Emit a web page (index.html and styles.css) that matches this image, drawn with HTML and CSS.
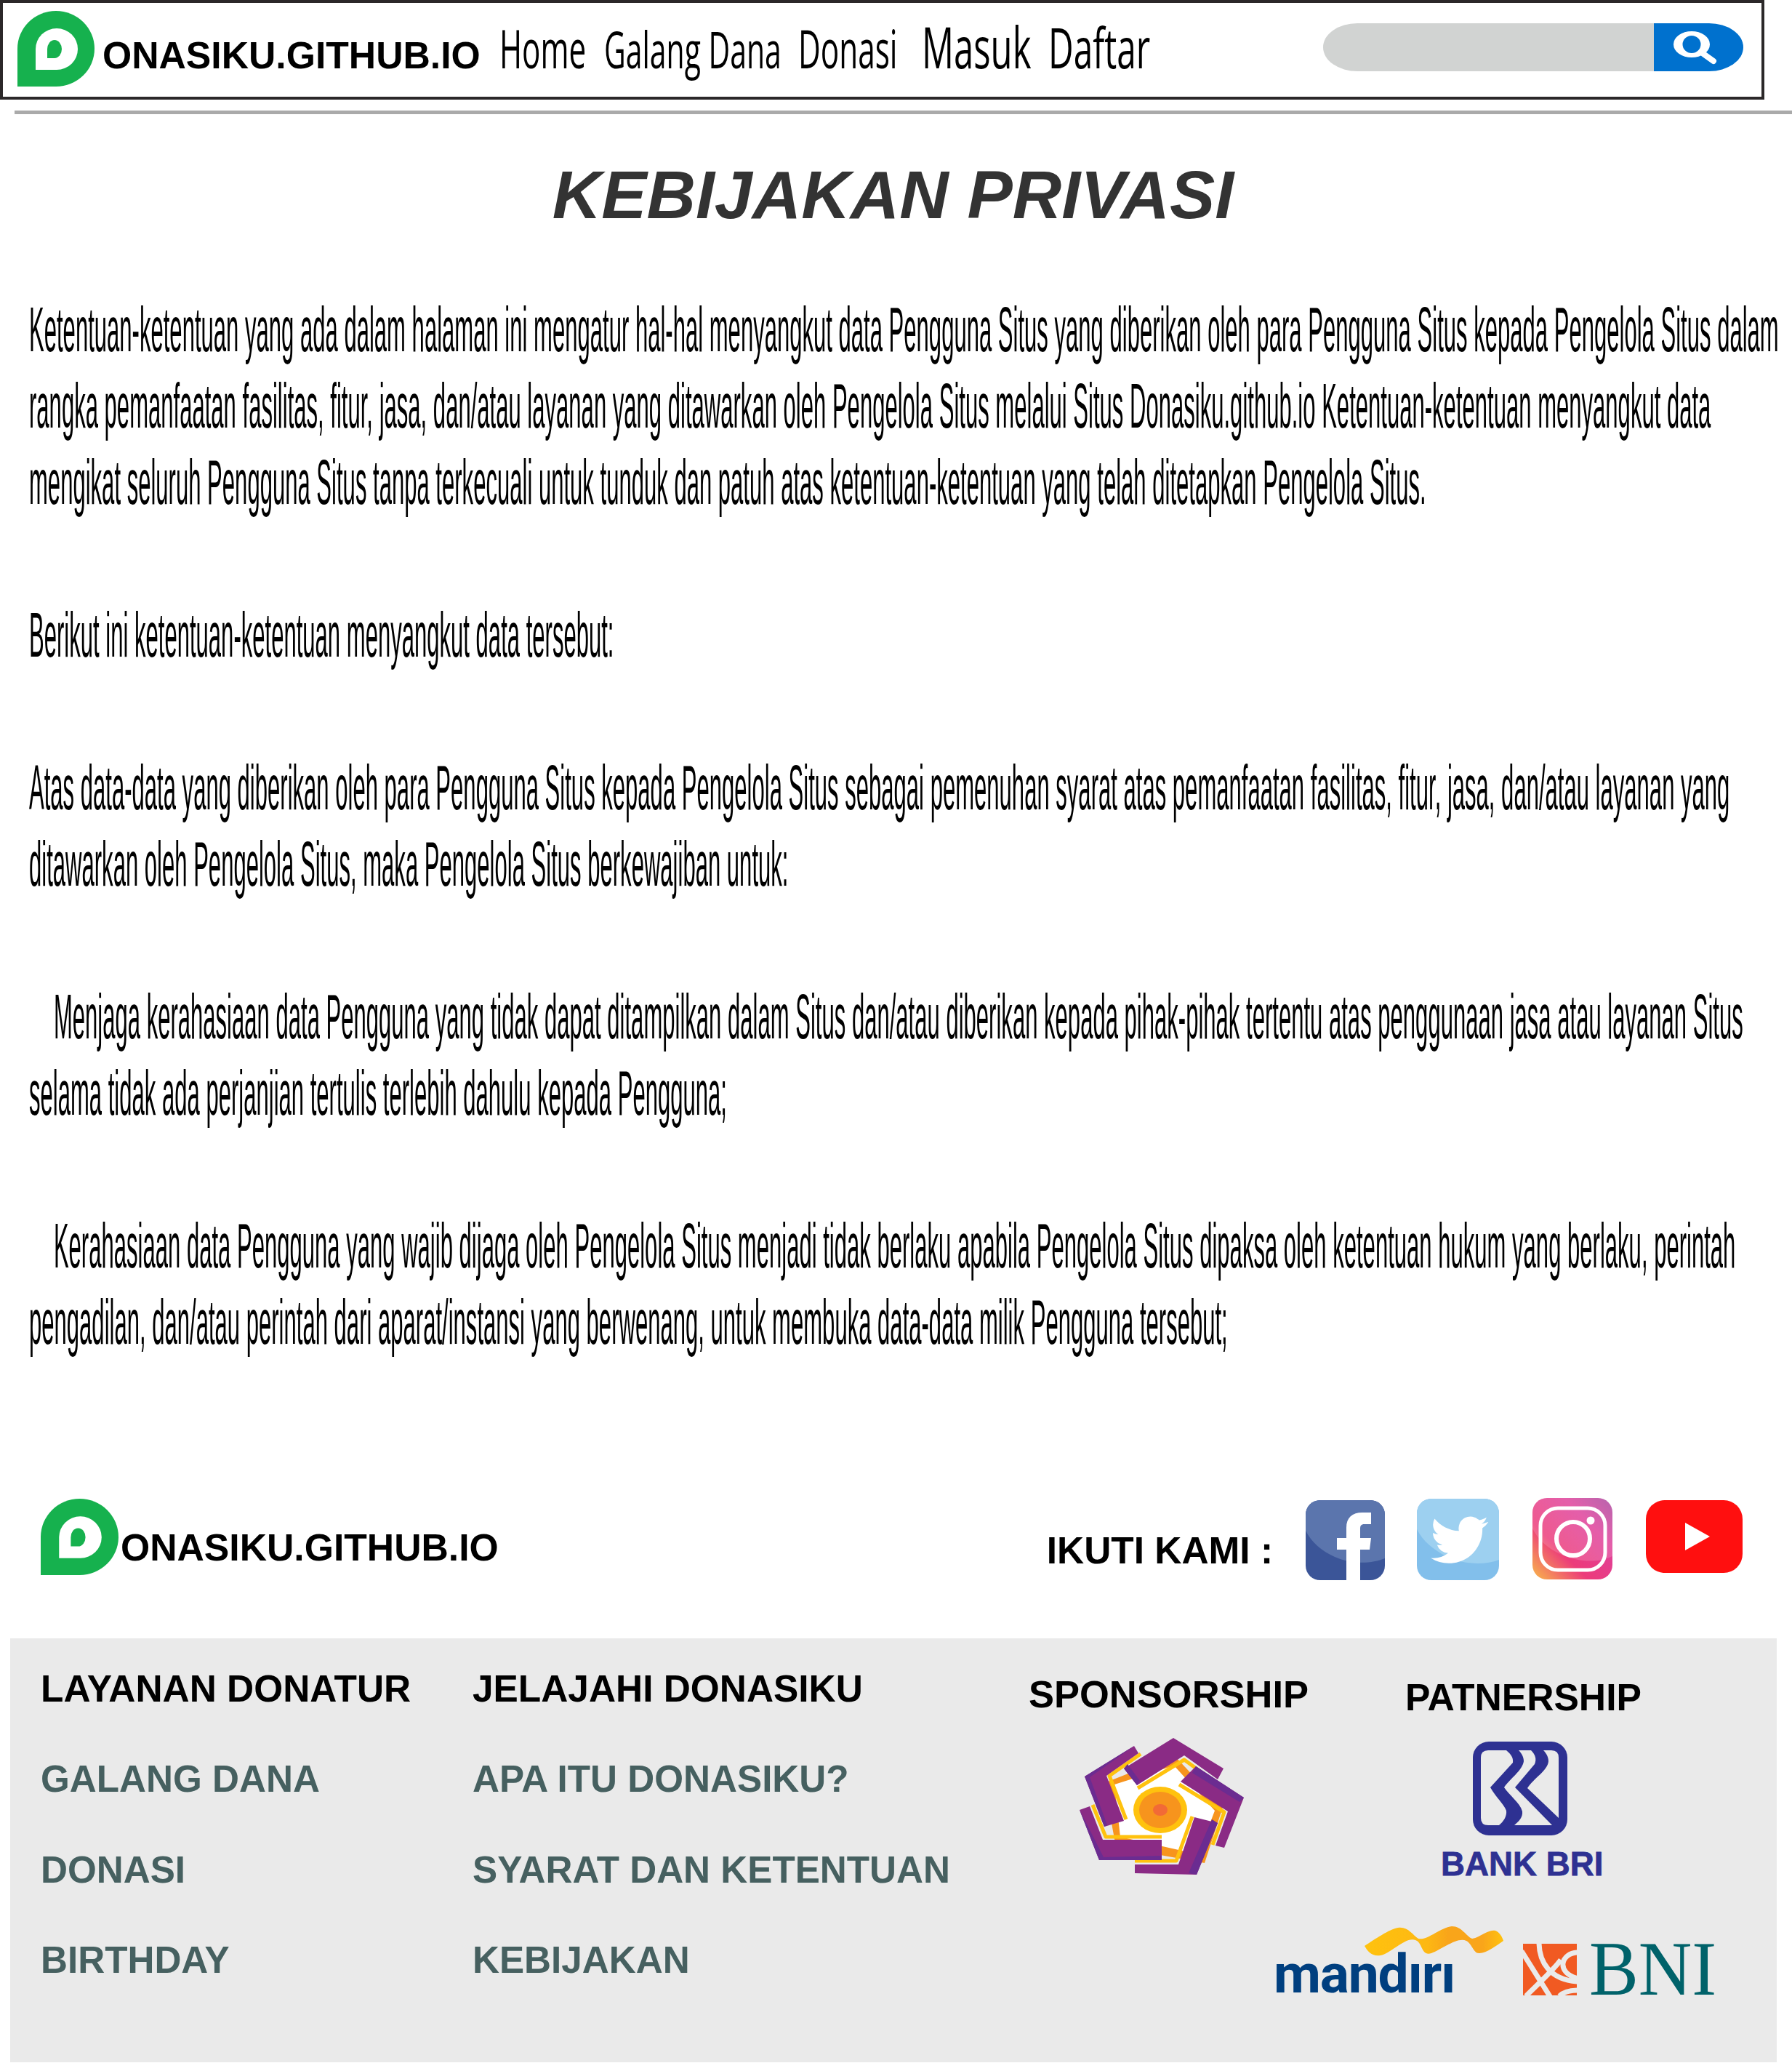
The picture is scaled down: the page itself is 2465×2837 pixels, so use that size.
FILE: index.html
```html
<!DOCTYPE html>
<html lang="id">
<head>
    <meta charset="UTF-8">
    <meta name="viewport" content="width=device-width, initial-scale=1.0">
    <title>Kebijakan Privasi - Donasiku</title>
    <link rel="stylesheet" href="styles.css">
</head>
<body>
    <!-- navbar -->
    <header class="topbar">
        <svg class="logo logo-top" viewBox="0 0 106 104">
            <path fill="#16b14e" d="M0 104V52A53 52 0 1 1 53 104Z"/>
            <path fill="#fff" d="M25 81V52.5A29 28.5 0 1 1 54 81Z"/>
            <path fill="#16b14e" d="M41 65V52.5A10 12.5 0 1 1 51 65Z"/>
        </svg>
        <div class="topbar-main">
            <span class="brand-name">ONASIKU.GITHUB.IO</span>
            <nav class="nav">
                <a href="#" class="nav-item nav-home"><span>Home</span></a>
                <a href="#" class="nav-item nav-galang"><span>Galang Dana</span></a>
                <a href="#" class="nav-item nav-donasi"><span>Donasi</span></a>
                <a href="#" class="nav-item nav-masuk"><span>Masuk</span></a>
                <a href="#" class="nav-item nav-daftar"><span>Daftar</span></a>
            </nav>
        </div>
        <form class="search">
            <div class="search-input"></div>
            <button type="button" class="search-btn">
                <svg viewBox="0 0 123 66" class="search-icon">
                    <path fill="#fff" fill-rule="evenodd" d="M27 29a25 18 0 1 0 50 0a25 18 0 1 0 -50 0zM39.500 29a12.500 12 0 1 0 25 0a12.500 12 0 1 0 -25 0z"/>
                    <path d="M68 42L82 52" stroke="#fff" stroke-width="8" stroke-linecap="round"/>
                </svg>
            </button>
        </form>
    </header>
    <div class="rule"></div>

    <h1 class="title">KEBIJAKAN PRIVASI</h1>

    <!-- isi kebijakan -->
    <main class="policy">
        <p>Ketentuan-ketentuan yang ada dalam halaman ini mengatur hal-hal menyangkut data Pengguna Situs yang diberikan oleh para Pengguna Situs kepada Pengelola Situs dalam<br>
        rangka pemanfaatan fasilitas, fitur, jasa, dan/atau layanan yang ditawarkan oleh Pengelola Situs melalui Situs Donasiku.github.io Ketentuan-ketentuan menyangkut data<br>
        mengikat seluruh Pengguna Situs tanpa terkecuali untuk tunduk dan patuh atas ketentuan-ketentuan yang telah ditetapkan Pengelola Situs.</p>
        <p>Berikut ini ketentuan-ketentuan menyangkut data tersebut:</p>
        <p>Atas data-data yang diberikan oleh para Pengguna Situs kepada Pengelola Situs sebagai pemenuhan syarat atas pemanfaatan fasilitas, fitur, jasa, dan/atau layanan yang<br>
        ditawarkan oleh Pengelola Situs, maka Pengelola Situs berkewajiban untuk:</p>
        <p class="indent">Menjaga kerahasiaan data Pengguna yang tidak dapat ditampilkan dalam Situs dan/atau diberikan kepada pihak-pihak tertentu atas penggunaan jasa atau layanan Situs<br>
        selama tidak ada perjanjian tertulis terlebih dahulu kepada Pengguna;</p>
        <p class="indent">Kerahasiaan data Pengguna yang wajib dijaga oleh Pengelola Situs menjadi tidak berlaku apabila Pengelola Situs dipaksa oleh ketentuan hukum yang berlaku, perintah<br>
        pengadilan, dan/atau perintah dari aparat/instansi yang berwenang, untuk membuka data-data milik Pengguna tersebut;</p>
    </main>

    <!-- brand + sosmed -->
    <section class="follow">
        <svg class="logo logo-foot" viewBox="0 0 106 104">
            <path fill="#16b14e" d="M0 104V52A53 52 0 1 1 53 104Z"/>
            <path fill="#fff" d="M25 81V52.5A29 28.5 0 1 1 54 81Z"/>
            <path fill="#16b14e" d="M41 65V52.5A10 12.5 0 1 1 51 65Z"/>
        </svg>
        <span class="brand-name brand-foot">ONASIKU.GITHUB.IO</span>
        <div class="social">
            <span class="follow-label">IKUTI KAMI :</span>
            <svg class="icon-fb" viewBox="0 0 109 110">
                <rect width="109" height="110" rx="20" fill="#3b5598"/>
                <path fill="#5b75ad" d="M0 42V20A20 20 0 0 1 20 0H89A20 20 0 0 1 109 20V80C90 88 62 88 40 78C22 70 8 58 0 42Z"/>
                <path fill="#fff" d="M56 110V68H43V52H56V38C56 24 64 17 78 17H90V33H81C76 33 75 35 75 40V52H90L88 68H75V110Z"/>
            </svg>
            <svg class="icon-tw" viewBox="0 0 113 112">
                <rect width="113" height="112" rx="20" fill="#82bfeb"/>
                <path fill="#9dd0f0" d="M0 42V20A20 20 0 0 1 20 0H93A20 20 0 0 1 113 20V84C92 92 64 90 42 80C22 70 8 58 0 42Z"/>
                <path fill="#fff" transform="translate(19 17) scale(3.3)" d="M23.953 4.57a10 10 0 01-2.825.775 4.958 4.958 0 002.163-2.723c-.951.555-2.005.959-3.127 1.184a4.92 4.92 0 00-8.384 4.482C7.69 8.095 4.067 6.13 1.64 3.162a4.822 4.822 0 00-.666 2.475c0 1.71.87 3.213 2.188 4.096a4.904 4.904 0 01-2.228-.616v.06a4.923 4.923 0 003.946 4.827 4.996 4.996 0 01-2.212.085 4.936 4.936 0 004.604 3.417 9.867 9.867 0 01-6.102 2.105c-.39 0-.779-.023-1.17-.067a13.995 13.995 0 007.557 2.209c9.053 0 13.998-7.496 13.998-13.985 0-.21 0-.42-.015-.63A9.935 9.935 0 0024 4.59z"/>
            </svg>
            <svg class="icon-ig" viewBox="0 0 110 112">
                <defs>
                    <linearGradient id="igGrad" x1="0" y1="1" x2="1" y2="0">
                        <stop offset="0" stop-color="#f9b949"/>
                        <stop offset=".35" stop-color="#ec3b7a"/>
                        <stop offset=".7" stop-color="#e0409a"/>
                        <stop offset="1" stop-color="#a9479f"/>
                    </linearGradient>
                </defs>
                <rect width="110" height="112" rx="20" fill="url(#igGrad)"/>
                <path fill="#fff" opacity=".16" d="M0 42V20A20 20 0 0 1 20 0H90A20 20 0 0 1 110 20V80C90 90 62 88 40 78C22 70 8 58 0 42Z"/>
                <rect x="11" y="14" width="89" height="85" rx="24" fill="none" stroke="#fff" stroke-width="5"/>
                <circle cx="56" cy="56" r="23" fill="none" stroke="#fff" stroke-width="6"/>
                <circle cx="80" cy="31" r="5.500" fill="#fff"/>
            </svg>
            <svg class="icon-yt" viewBox="0 0 133 100">
                <rect width="133" height="100" rx="26" fill="#ff0f0f"/>
                <path fill="#fff" d="M54 31L88 50L54 69Z"/>
            </svg>
        </div>
    </section>

    <!-- footer -->
    <footer class="footer">
        <div class="links links-layanan">
            <h3>LAYANAN DONATUR</h3>
            <a href="#">GALANG DANA</a>
            <a href="#">DONASI</a>
            <a href="#">BIRTHDAY</a>
        </div>
        <div class="links links-jelajah">
            <h3>JELAJAHI DONASIKU</h3>
            <a href="#">APA ITU DONASIKU?</a>
            <a href="#">SYARAT DAN KETENTUAN</a>
            <a href="#">KEBIJAKAN</a>
        </div>
        <div class="partners">
            <div class="partners-top">
                <div class="sponsor">
                    <h3>SPONSORSHIP</h3>
                    <svg class="sponsor-logo" viewBox="0 0 226 188">
                        <path fill="#f7941d" d="M130 24L197 95L172 172L50 150L34 62Z"/>
                        <path fill="#fff" d="M130 38L186 100L163 160L56 136L48 64Z"/>
                        <g fill="none" stroke="#ffc20e" stroke-width="5" stroke-linejoin="round">
                            <path d="M80 69L144 30L188 62"/>
                            <path d="M84 22L41 52L64 112"/>
                            <path d="M18 92L36 136H113"/>
                            <path d="M155 108L133 169H76"/>
                            <path d="M137 64L199 102L183 147"/>
                        </g>
                        <path fill="#8a2b85" d="M75 11L7 53L34 122L61 114L37 52L81 21Z"/>
                        <path fill="#8a2b85" d="M129 0L198 42L190 57L144 24L79 65L61 42Z"/>
                        <path fill="#8a2b85" d="M160 39L226 82L199 151L187 148L204 101L139 60Z"/>
                        <path fill="#8a2b85" d="M76 186L161 188L190 117L158 109L136 174H76Z"/>
                        <path fill="#8a2b85" d="M0 99L27 168L113 167V140H32L14 94Z"/>
                        <g fill="#6b2c91">
                            <path d="M61 42L79 65L83 59L66 36Z"/>
                            <path d="M75 11L7 53L34 122L38 120L14 54Z"/>
                            <path d="M0 99L27 168H113V162L33 164Z"/>
                            <path d="M161 188L190 117L182 112L150 186Z"/>
                            <path d="M160 39L226 82L220 88L155 48Z"/>
                        </g>
                        <ellipse cx="111" cy="99" rx="37" ry="32" fill="#ffc20e"/>
                        <ellipse cx="111" cy="99" rx="29" ry="25" fill="#f7941d"/>
                        <ellipse cx="111" cy="99" rx="10" ry="8" fill="#f26a36"/>
                    </svg>
                </div>
                <div class="partner">
                    <h3>PATNERSHIP</h3>
                    <svg class="bri-logo" viewBox="0 0 130 129">
                        <rect width="130" height="129" rx="22" fill="#2e3192"/>
                        <path fill="#eaeaea" d="M21 12H46C52 17 56 22 55 29L24 63C32 77 42 85 46 95C47 103 42 110 36 115H21Q11 115 11 105V22Q11 12 21 12Z"/>
                        <path fill="#eaeaea" d="M63 12H80C86 18 88 24 85 31L58 63L109 115H57C63 110 69 104 68 96C65 84 50 74 43 63C52 50 68 40 70 27C70 21 67 16 63 12Z"/>
                        <path fill="#eaeaea" d="M97 12H108Q118 12 118 22V105L75 64C84 50 103 40 104 27C104 21 101 16 97 12Z"/>
                    </svg>
                    <span class="bri-name">BANK BRI</span>
                </div>
            </div>
            <div class="banks">
                <div class="mandiri">
                    <svg class="mandiri-wave" viewBox="0 0 191 41">
                        <defs>
                            <linearGradient id="waveGrad" x1="0" y1="0" x2="1" y2="0">
                                <stop offset="0" stop-color="#ffc20e"/>
                                <stop offset=".45" stop-color="#fdb813"/>
                                <stop offset=".6" stop-color="#f9a51a"/>
                                <stop offset=".85" stop-color="#f9a51a"/>
                                <stop offset="1" stop-color="#ffc20e"/>
                            </linearGradient>
                        </defs>
                        <path fill="url(#waveGrad)" d="M0 27C14 18 34 4 46 2C60 0 66 12 74 17C86 20 104 2 120 0C134 0 140 14 148 17C158 16 170 4 180 6C186 8 190 16 191 20C182 26 168 37 158 37C150 38 148 24 140 20C128 14 106 32 92 37C78 42 80 22 70 19C56 14 36 38 22 40C10 42 4 34 0 27Z"/>
                    </svg>
                    <span class="mandiri-name">mandırı</span>
                </div>
                <svg class="bni-mark" viewBox="0 0 74 71">
                    <rect width="74" height="71" fill="#f15a22"/>
                    <g fill="none" stroke="#eaeaea" stroke-width="7">
                        <path d="M-2 10L38 74"/>
                        <path d="M4 72C20 56 44 34 52 22"/>
                        <path d="M22 -2C22 24 36 50 76 52"/>
                        <path d="M76 12C52 12 44 40 76 48"/>
                        <path d="M50 72C56 66 66 64 76 64"/>
                    </g>
                </svg>
                <span class="bni-name"><span>BNI</span></span>
            </div>
        </div>
    </footer>
</body>
</html>
```

FILE: styles.css
```css
html, body {
    margin: 0;
    overflow: hidden;
}
body {
    font-family: "Liberation Sans", Arial, sans-serif;
    background-color: #fff;
    color: #000;
}
a {
    color: inherit;
    text-decoration: none;
}

/* navbar */
.topbar {
    display: flex;
    align-items: flex-start;
    box-sizing: border-box;
    width: 2427px;
    height: 137px;
    border: 4px solid #2b2829;
    padding-left: 20px;
}
.logo {
    flex-shrink: 0;
    display: block;
}
.logo-top {
    width: 106px;
    height: 104px;
    margin-top: 11px;
}
.topbar-main {
    display: flex;
    align-items: baseline;
    margin-top: 21px;
    margin-left: 11px;
}
.brand-name {
    font-size: 51.7px;
    line-height: 1;
    font-weight: bold;
    white-space: nowrap;
}
.nav {
    display: flex;
    align-items: baseline;
    margin-left: 26px;
    font-family: "Open Sans", sans-serif;
}
.nav-item {
    flex-shrink: 0;
    line-height: 1;
    white-space: nowrap;
}
.nav-item span {
    display: inline-block;
    transform-origin: left;
}
.nav-home { width: 144px; font-size: 73px; }
.nav-home span { transform: scaleX(.578); }
.nav-galang { width: 267px; font-size: 69px; }
.nav-galang span { transform: scaleX(.593); }
.nav-donasi { width: 170px; font-size: 74px; }
.nav-donasi span { transform: scaleX(.572); }
.nav-masuk { width: 174px; font-size: 78px; }
.nav-masuk span { transform: scaleX(.628); }
.nav-daftar { width: 140px; font-size: 76px; }
.nav-daftar span { transform: scaleX(.628); }

.search {
    display: flex;
    margin: 28px 25px 0 auto;
    height: 66px;
    width: 578px;
}
.search-input {
    width: 455px;
    background-color: #d1d3d2;
    border-radius: 47px 0 0 47px / 33px 0 0 33px;
}
.search-btn {
    width: 123px;
    padding: 0;
    border: 0;
    background-color: #0071ce;
    border-radius: 0 47px 47px 0 / 0 33px 33px 0;
}
.search-icon {
    display: block;
    width: 123px;
    height: 66px;
}

.rule {
    height: 5px;
    margin: 15px 0 0 20px;
    background-color: #aaa;
}

.title {
    margin: 65px 8px 0 0;
    font-size: 93.4px;
    line-height: 92px;
    font-style: italic;
    font-weight: bold;
    color: #333;
    text-align: center;
}

/* isi */
.policy {
    width: 2407px;
    margin: 86px 0 0 40px;
    font-size: 88px;
    line-height: 105px;
    white-space: nowrap;
    transform: scaleX(.3529);
    transform-origin: left top;
}
.policy p {
    margin: 0 0 105px;
}
.policy p:last-child {
    margin-bottom: 0;
}
.policy .indent {
    text-indent: 96px;
}

/* brand + sosmed */
.follow {
    display: flex;
    align-items: flex-start;
    margin-top: 190px;
    padding: 0 68px 0 56px;
}
.logo-foot {
    width: 107px;
    height: 107px;
}
.brand-foot {
    margin: 43px 0 0 3px;
}
.social {
    display: flex;
    align-items: flex-start;
    gap: 46px;
    margin-left: auto;
}
.follow-label {
    margin: 47px -1px 0 0;
    font-size: 51.4px;
    line-height: 1;
    font-weight: bold;
    white-space: nowrap;
}
.icon-fb { width: 109px; height: 110px; margin-top: 3px; }
.icon-tw { width: 113px; height: 112px; margin: 1px 1px 0 -2px; }
.icon-ig { width: 110px; height: 112px; margin-left: -1px; }
.icon-yt { width: 133px; height: 100px; margin-top: 3px; }

/* footer */
.footer {
    display: flex;
    box-sizing: border-box;
    width: 2430px;
    height: 583px;
    margin: 80px 0 0 14px;
    background-color: #eaeaea;
}
.footer h3 {
    margin: 0;
    font-size: 51.4px;
    line-height: 1;
    font-weight: bold;
    color: #000;
    white-space: nowrap;
}
.links {
    display: flex;
    flex-direction: column;
    gap: 73px;
    box-sizing: border-box;
    padding-top: 44px;
    font-size: 51.2px;
    line-height: 1;
    font-weight: bold;
    color: #466060;
    white-space: nowrap;
}
.links-layanan {
    width: 636px;
    padding-left: 42px;
}
.links-jelajah {
    width: 765px;
}
.partners-top {
    display: flex;
}
.sponsor {
    width: 518px;
    padding-top: 51px;
}
.footer .sponsor h3 {
    font-size: 52.5px;
}
.sponsor-logo {
    display: block;
    width: 226px;
    height: 188px;
    margin: 33px 0 0 70px;
}
.partner {
    padding-top: 56px;
}
.footer .partner h3 {
    font-size: 51.6px;
}
.bri-logo {
    display: block;
    width: 130px;
    height: 129px;
    margin: 34px 0 0 93px;
}
.bri-name {
    display: block;
    margin: 17px 0 0 49px;
    font-size: 45.7px;
    line-height: 1;
    font-weight: bold;
    color: #2e3192;
    white-space: nowrap;
    -webkit-text-stroke: .8px #2e3192;
}
.banks {
    display: flex;
    align-items: flex-start;
    margin: 63px 0 0 337px;
}
.mandiri {
    width: 316px;
    flex-shrink: 0;
}
.mandiri-wave {
    display: block;
    width: 191px;
    height: 41px;
    margin-left: 125px;
}
.mandiri-name {
    display: block;
    margin-top: -13px;
    font-family: Roboto, sans-serif;
    font-size: 75px;
    line-height: 1;
    font-weight: 700;
    letter-spacing: -1.2px;
    color: #003f7f;
}
.bni-mark {
    flex-shrink: 0;
    width: 74px;
    height: 71px;
    margin: 24px 0 0 27px;
}
.bni-name {
    margin: 6px 0 0 17px;
    font-family: "Liberation Serif", serif;
    font-size: 106px;
    line-height: 1;
    color: #00626a;
}
.bni-name span {
    display: inline-block;
    transform: scaleX(.96);
    transform-origin: left;
}
```
